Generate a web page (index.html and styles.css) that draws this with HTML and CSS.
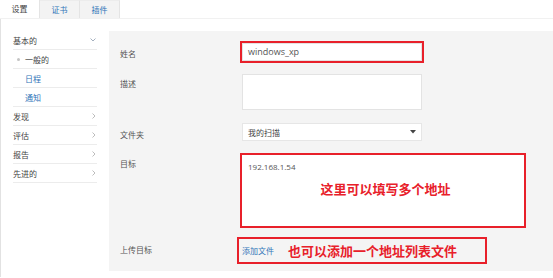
FILE: index.html
```html
<html>
  <head>
    <title>扫描设置</title>
    <meta content="text/html;charset=utf-8" http-equiv="Content-Type">
    <link rel="stylesheet" href="styles.css">
  </head>
  <body>
    <div class="tabs">
      <div class="tab active">设置</div>
      <div class="tab">证书</div>
      <div class="tab">插件</div>
    </div>

    <div class="main">
      <div class="side">
        <div class="item">
          <span>基本的</span>
          <svg class="chev" width="6" height="4" viewBox="0 0 6 4"><path d="M0.5 0.5 L3 3 L5.5 0.5" fill="none" stroke="#9aa7b8" stroke-width="0.9"/></svg>
        </div>
        <div class="item sub current"><span class="dot"></span>一般的</div>
        <div class="item sub link">日程</div>
        <div class="item sub link">通知</div>
        <div class="item">
          <span>发现</span>
          <svg class="chev" width="4" height="6" viewBox="0 0 4 6"><path d="M0.5 0.5 L3 3 L0.5 5.5" fill="none" stroke="#b5b5b5" stroke-width="0.9"/></svg>
        </div>
        <div class="item">
          <span>评估</span>
          <svg class="chev" width="4" height="6" viewBox="0 0 4 6"><path d="M0.5 0.5 L3 3 L0.5 5.5" fill="none" stroke="#b5b5b5" stroke-width="0.9"/></svg>
        </div>
        <div class="item">
          <span>报告</span>
          <svg class="chev" width="4" height="6" viewBox="0 0 4 6"><path d="M0.5 0.5 L3 3 L0.5 5.5" fill="none" stroke="#b5b5b5" stroke-width="0.9"/></svg>
        </div>
        <div class="item">
          <span>先进的</span>
          <svg class="chev" width="4" height="6" viewBox="0 0 4 6"><path d="M0.5 0.5 L3 3 L0.5 5.5" fill="none" stroke="#b5b5b5" stroke-width="0.9"/></svg>
        </div>
      </div>

      <div class="panel">
        <div class="row r-name">
          <div class="label">姓名</div>
          <div class="field input mark">windows_xp</div>
        </div>
        <div class="row r-desc">
          <div class="label">描述</div>
          <div class="field textarea"></div>
        </div>
        <div class="row r-folder">
          <div class="label">文件夹</div>
          <div class="field select">
            <span>我的扫描</span>
            <svg width="6" height="4" viewBox="0 0 6 4"><path d="M0 0 L6 0 L3 3.5 Z" fill="#444"/></svg>
          </div>
        </div>
        <div class="row r-target">
          <div class="label">目标</div>
          <div class="field targets mark">
            <div class="ip">192.168.1.54</div>
            <div class="note">这里可以填写多个地址</div>
          </div>
        </div>
        <div class="row r-upload">
          <div class="label">上传目标</div>
          <div class="upload">
            <span class="addfile">添加文件</span>
            <span class="note">也可以添加一个地址列表文件</span>
          </div>
        </div>
      </div>
    </div>
  </body>
</html>
```

FILE: styles.css
```css
body {
  margin: 0;
  background: #fff;
  font-family: "Open Sans", "Noto Sans CJK SC", sans-serif;
  font-size: 8px;
  color: #444;
}
.tabs {
  display: flex;
  height: 18px;
  border-bottom: 1px solid #f1f1f1;
}
.tab {
  width: 40px;
  height: 18px;
  line-height: 18px;
  text-align: center;
  background: #f3f3f3;
  border-right: 1px solid #e4e4e4;
  border-top: 1px solid #ececec;
  box-sizing: border-box;
  color: #2f74b8;
}
.tab.active {
  background: #fff;
  color: #444;
  border-top: 0;
}
.main {
  display: flex;
  height: 258px;
  border-left: 1px solid #e2e2e2;
}
.side {
  width: 96px;
  padding: 12px 0 0 12px;
}
.item {
  display: flex;
  align-items: center;
  justify-content: space-between;
  width: 84px;
  height: 18px;
  flex: none;
  border-bottom: 1px solid #ececec;
  color: #444;
}
.item .chev {
  margin-right: 1px;
}
.item.sub {
  justify-content: flex-start;
  padding-left: 12px;
  box-sizing: content-box;
  width: 72px;
}
.item.link {
  color: #2f74b8;
}
.item .dot {
  width: 3px;
  height: 3px;
  border-radius: 50%;
  background: #c4c4c4;
  margin: 0 5px 0 -8px;
}
.panel {
  margin-top: 12px;
  flex: 1;
  background: #f4f4f4;
  padding: 12px 0 7px 11px;
  height: 221px;
}
.row {
  display: flex;
  align-items: flex-start;
}
.label {
  width: 122px;
  flex: none;
  padding-top: 5px;
  line-height: 10px;
  color: #555;
}
.r-name .label { padding-top: 6px; }
.field {
  width: 180px;
  box-sizing: border-box;
  background: #fff;
  border: 1px solid #e3e3e3;
}
.mark {
  outline: 2px solid #e8202a;
}
.input {
  height: 18px;
  line-height: 16px;
  padding-left: 5px;
  font-size: 9px;
  color: #555;
}
.r-desc { margin-top: 13px; }
.textarea {
  height: 36px;
}
.r-folder { margin-top: 13px; }
.r-folder .label { padding-top: 7px; }
.select {
  height: 18px;
  display: flex;
  align-items: center;
  justify-content: space-between;
  padding: 0 5px 0 5px;
  border-color: #e6e6e6;
  color: #444;
}
.r-target { margin-top: 14px; }
.r-target .label { padding-top: 4px; }
.targets {
  width: 282px;
  height: 71px;
  border-color: #fff;
  padding: 6px 0 0 5px;
}
.ip {
  font-size: 8px;
  color: #555;
  line-height: 10px;
}
.note {
  color: #e8202a;
  font-weight: bold;
  font-size: 13px;
  font-family: "Noto Sans CJK SC", sans-serif;
}
.targets .note {
  text-align: center;
  margin-top: 8px;
  line-height: 18px;
}
.r-upload { margin-top: 11px; }
.r-upload .label { padding-top: 8px; }
.upload {
  display: flex;
  align-items: center;
  width: 250px;
  height: 27px;
  box-sizing: border-box;
  border: 2px solid #e8202a;
  margin-left: -5px;
  padding-left: 3px;
}
.addfile {
  color: #2f74b8;
  margin-right: 14px;
}
```
